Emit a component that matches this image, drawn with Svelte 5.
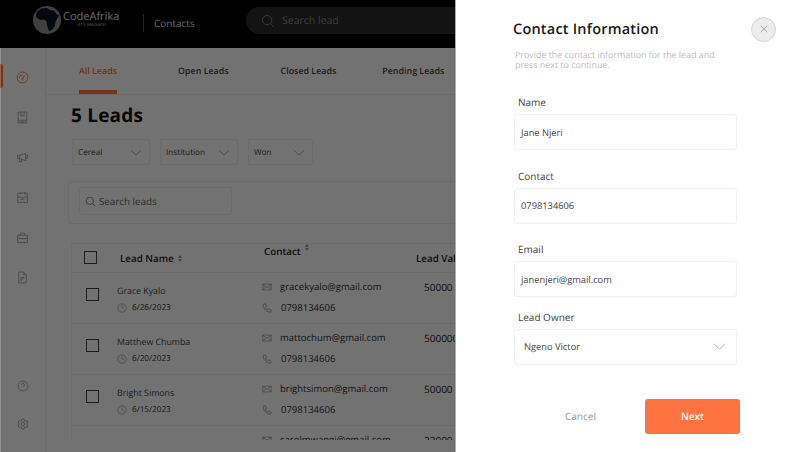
<script>
	const filters = [
		{ label: 'Cereal', cls: 'f1' },
		{ label: 'Institution', cls: 'f2' },
		{ label: 'Won', cls: 'f3' }
	];
	const tabs = ['All Leads', 'Open Leads', 'Closed Leads', 'Pending Leads'];
	const leads = [
		{ name: 'Grace Kyalo', date: '6/26/2023', email: 'gracekyalo@gmail.com', value: '50000' },
		{ name: 'Matthew Chumba', date: '6/20/2023', email: 'mattochum@gmail.com', value: '500000' },
		{ name: 'Bright Simons', date: '6/15/2023', email: 'brightsimon@gmail.com', value: '50000' },
		{ name: 'Carol Mwangi', date: '6/12/2023', email: 'carolmwangi@gmail.com', value: '22000' }
	];
	const fields = [
		{ label: 'Name', value: 'Jane Njeri' },
		{ label: 'Contact', value: '0798134606' },
		{ label: 'Email', value: 'janenjeri@gmail.com' }
	];
	const navTop = [
		'M2 12a10 10 0 1 1 20 0 10 10 0 0 1-20 0z M12 13l4-5 M6 13a6 6 0 0 1 6-6 M18 13v0 M12 13a1.500 1.500 0 1 0 .1 0',
		'M4 2h16v20H4z M4 17h16 M9 2v8l3-2 3 2V2 M8 20h8',
		'M3 8h4l11-4v14L7 14H3z M7 8v6 M18 8h3v5h-3 M6 14v6h4v-5',
		'M3 4h18v17H3z M3 11h6l1 2h4l1-2h6 M8 2v4 M16 2v4 M8 16h8',
		'M3 8h18v13H3z M8 8V4h8v4 M3 14h18 M12 13v2',
		'M5 2h9l5 5v15H5z M14 2v5h5 M9 12h6l-6 6v-6z'
	];
</script>

<div class="app">
	<header class="topbar">
		<div class="logo">
			<svg viewBox="0 0 28 28" width="28" height="28">
				<circle cx="14" cy="14" r="14" fill="#8e8e8e" />
				<path d="M8 2.500 14 2l3 2 4 .5 3 4 2.500.5-3 5-1 2-.5 4-3.500 4.500h-3l-1.500-6-.5-3-2-2-4.500.5-4-3 .5-5z" fill="#0d1622" />
			</svg>
			<div class="brand">
				<span class="brand-name">CodeAfrika</span>
				<span class="brand-sub">LET'S INNOVATE!</span>
			</div>
		</div>
		<div class="page-name">Contacts</div>
		<div class="top-search">
			<svg viewBox="0 0 24 24" width="14" height="14" class="ic"><circle cx="10.500" cy="10.500" r="8" /><path d="m16.500 16.500 6 6" /></svg>
			<span>Search lead</span>
		</div>
	</header>

	<div class="body">
		<nav class="sidebar">
			<div class="nav-top">
				{#each navTop as d, i}
					<span class="nav-item" class:active={i === 0}>
						<svg viewBox="0 0 24 24" width="13" height="13" class="ic"><path d={d} /></svg>
					</span>
				{/each}
			</div>
			<div class="nav-bottom">
				<svg viewBox="0 0 24 24" width="12" height="12" class="ic"><circle cx="12" cy="12" r="10" /><path d="M9 9.500a3 3 0 1 1 4.500 2.500c-1 .6-1.500 1.200-1.500 2.500 M12 17v1" /></svg>
				<svg viewBox="0 0 24 24" width="12" height="12" class="ic"><circle cx="12" cy="12" r="3.500" /><path d="M10 2h4l.6 3 2.600 1.500 2.900-1 2 3.500-2.300 2v2l2.300 2-2 3.500-2.900-1-2.600 1.500-.6 3h-4l-.6-3-2.600-1.500-2.900 1-2-3.500 2.300-2v-2L1.900 9l2-3.500 2.900 1L9.400 5z" /></svg>
			</div>
		</nav>

		<main class="main">
			<div class="tabs">
				{#each tabs as t, i}
					<span class="tab" class:current={i === 0}>{t}</span>
				{/each}
			</div>
			<h1>5 Leads</h1>
			<div class="filters">
				{#each filters as f}
					<div class="filter {f.cls}">
						<span>{f.label}</span>
						<svg viewBox="0 0 16 9" width="12" height="7" class="chev"><path d="m1 1 7 7 7-7" /></svg>
					</div>
				{/each}
			</div>
			<div class="search-card">
				<div class="search-leads">
					<svg viewBox="0 0 24 24" width="11" height="11" class="ic"><circle cx="10.500" cy="10.500" r="8" /><path d="m16.500 16.500 6 6" /></svg>
					<span>Search leads</span>
				</div>
			</div>
			<div class="table">
				<div class="thead">
					<span class="box head-box"></span>
					<span class="th th-name">Lead Name
						<svg viewBox="0 0 6 10" width="4" height="7" class="sort"><path d="M3 0l3 4H0zM3 10 0 6h6z" /></svg>
					</span>
					<span class="th th-contact">Contact
						<svg viewBox="0 0 6 10" width="4" height="7" class="sort up"><path d="M3 0l3 4H0zM3 10 0 6h6z" /></svg>
					</span>
					<span class="th th-value">Lead Value</span>
				</div>
				{#each leads as lead}
					<div class="row">
						<span class="box"></span>
						<div class="who">
							<span class="lead-name">{lead.name}</span>
							<span class="lead-date">
								<svg viewBox="0 0 24 24" width="10" height="10" class="ic"><circle cx="12" cy="12" r="10" /><path d="M12 6v6l4 2" /></svg>
								{lead.date}
							</span>
						</div>
						<div class="contact">
							<span class="line">
								<svg viewBox="0 0 24 24" width="10" height="10" class="ic"><path d="M2 5h20v14H2z M2 5l10 8 10-8 M2 19l7-8 M22 19l-7-8" /></svg>
								{lead.email}
							</span>
							<span class="line phone">
								<svg viewBox="0 0 24 24" width="10" height="10" class="ic"><path d="M3 3l5-1 3 6-3 2c1 3 3 6 6 7l2-3 6 3-1 5C10 22 2 13 3 3z" /></svg>
								0798134606
							</span>
						</div>
						<span class="value">{lead.value}</span>
					</div>
				{/each}
			</div>
		</main>
	</div>

	<div class="overlay"></div>

	<aside class="drawer">
		<div class="drawer-head">
			<h2>Contact Information</h2>
			<button class="close" aria-label="Close">
				<svg viewBox="0 0 10 10" width="8" height="8"><path d="m1 1 8 8M9 1 1 9" /></svg>
			</button>
		</div>
		<p class="lede">Provide the contact information for the lead and press next to continue.</p>
		<form class="form">
			{#each fields as f}
				<div class="field">
					<span class="label">{f.label}</span>
					<div class="input">{f.value}</div>
				</div>
			{/each}
			<div class="field owner">
				<span class="label">Lead Owner</span>
				<div class="input select">
					<span>Ngeno Victor</span>
					<svg viewBox="0 0 16 9" width="13" height="7" class="chev"><path d="m1 1 7 7 7-7" /></svg>
				</div>
			</div>
		</form>
		<div class="actions">
			<span class="cancel">Cancel</span>
			<span class="next">Next</span>
		</div>
	</aside>
</div>

<style>
	:global(body) { margin: 0; }
	.app {
		position: relative; width: 806px; height: 452px; overflow: hidden;
		background: #fdfdfd; font-family: "Open Sans", sans-serif; color: #333;
		text-rendering: geometricPrecision;
	}
	.ic { fill: none; stroke: currentColor; stroke-width: 1.500; flex-shrink: 0; }

	/* top bar */
	.topbar { height: 48px; background: #000; display: flex; align-items: flex-start; color: #fff; box-sizing: border-box; }
	.logo { display: flex; align-items: center; gap: 2px; margin: 6px 0 0 33px; width: 110px; }
	.brand { display: flex; flex-direction: column; align-items: center; margin-top: -3px; }
	.brand-name { font-size: 11px; line-height: 13px; color: #e2e2e2; }
	.brand-sub { font-size: 3.800px; line-height: 5px; color: #ddd; }
	.page-name {
		margin-top: 14px; height: 18px; border-left: 1px solid #555; padding-left: 10px; width: 92px;
		font-size: 10px; line-height: 18px; color: #ddd;
	}
	.top-search {
		flex: 1; height: 27px; margin-top: 7px; background: #2c2c2c; border-radius: 14px 0 0 14px;
		display: flex; align-items: center; gap: 7px; padding-left: 15px; color: #888; font-size: 10.500px;
	}

	/* sidebar */
	.body { display: flex; height: 404px; }
	.sidebar {
		width: 45px; border-right: 1px solid #eee; flex-shrink: 0; box-sizing: content-box;
		display: flex; flex-direction: column; justify-content: space-between; color: #999;
	}
	.nav-top { display: flex; flex-direction: column; gap: 27px; padding-top: 23px; }
	.nav-item { height: 13px; display: flex; justify-content: center; position: relative; }
	.nav-item.active { color: #ff7340; }
	.nav-item.active::before {
		content: ''; position: absolute; left: 0; top: -7px; width: 3px; height: 24px;
		background: #ff7340; border-radius: 0 2px 2px 0;
	}
	.nav-bottom { display: flex; flex-direction: column; align-items: center; gap: 26px; padding-bottom: 22px; }

	/* main */
	.main { flex: 1; min-width: 0; display: flex; flex-direction: column; }
	.tabs { height: 46px; display: flex; border-bottom: 1px solid #eee; padding-left: 33px; flex-shrink: 0; }
	.tab { font-size: 8.900px; font-weight: 600; color: #444; line-height: 46px; height: 46px; white-space: nowrap; box-sizing: border-box; }
	.tab:nth-child(2) { margin-left: 61px; margin-right: 52px; }
	.tab:nth-child(3) { margin-right: 46px; }
	.tab.current { color: #ff7340; border-bottom: 4px solid #ff7340; border-radius: 4px 4px 0 0; }
	h1 { margin: 7px 0 0 25px; font-size: 19px; line-height: 26px; font-weight: 700; color: #111; letter-spacing: .2px; }
	.filters { display: flex; gap: 10px; margin: 11px 0 0 26px; }
	.filter {
		height: 26px; box-sizing: border-box; border: 1px solid #eee; border-radius: 3px;
		display: flex; align-items: center; justify-content: space-between; padding: 0 7px 0 5px;
		font-size: 8.200px; color: #444; width: 78px;
	}
	.f3 { width: 65px; }
	.chev { fill: none; stroke: #aaa; stroke-width: 1.200; }
	.search-card { margin: 16px 0 0 22px; height: 43px; border: 1px solid #eee; border-right: 0; border-radius: 3px 0 0 3px; padding: 5px 0 0 10px; box-sizing: border-box; }
	.search-leads {
		width: 153px; height: 28px; box-sizing: border-box; border: 1px solid #eee; border-radius: 3px;
		display: flex; align-items: center; gap: 3px; padding-left: 5px; font-size: 9.800px; color: #666;
	}
	.table { margin: 19px 0 0 25px; height: 197px; overflow: hidden; border-left: 1px solid #f2f2f2; }
	.thead { height: 30px; display: flex; border: 1px solid #eee; border-width: 1px 0; box-sizing: border-box; }
	.box { width: 13px; height: 13px; border: 1px solid #444; box-sizing: border-box; flex-shrink: 0; background: transparent; }
	.head-box { margin: 7px 0 0 12px; }
	.th { font-size: 9.800px; font-weight: 600; color: #222; white-space: nowrap; }
	.th-name { margin: 8px 0 0 23px; width: 144px; }
	.th-contact { margin: 0; width: 152px; }
	.th-value { margin-top: 8px; }
	.sort { fill: #888; margin-left: 2px; }
	.sort.up { vertical-align: 4px; }
	.row { height: 51px; display: flex; border-bottom: 1px solid #eee; box-sizing: border-box; }
	.row .box { margin: 15px 0 0 14px; }
	.who { width: 145px; margin-left: 18px; padding-top: 12px; display: flex; flex-direction: column; gap: 3px; }
	.lead-name { font-size: 8.800px; line-height: 13px; color: #444; }
	.lead-date { font-size: 8.200px; line-height: 13px; color: #333; display: flex; align-items: center; gap: 5px; }
	.lead-date .ic { color: #888; }
	.contact { width: 162px; padding-top: 7px; display: flex; flex-direction: column; gap: 7px; }
	.line { font-size: 9.500px; line-height: 14px; color: #333; display: flex; align-items: center; gap: 8px; white-space: nowrap; }
	.line .ic { color: #888; }
	.phone { gap: 9px; }
	.value { font-size: 10px; line-height: 14px; margin-top: 7px; color: #222; }

	.overlay { position: absolute; inset: 0; background: rgba(0, 0, 0, 0.55); }
	.overlay::before {
		content: ''; position: absolute; left: 0; top: 48px; bottom: 0; width: 1px;
		background: rgba(255, 255, 255, 0.25);
	}

	/* drawer */
	.drawer {
		position: absolute; top: 0; right: 0; bottom: 0; width: 351px; background: #fff;
		border-left: 1px solid #aaa; padding: 17px 0 0 57px; box-sizing: border-box;
	}
	.drawer-head { display: flex; align-items: center; justify-content: space-between; width: 263px; height: 24px; }
	h2 { margin: 0; font-size: 14.500px; font-weight: 600; color: #1a1a1a; letter-spacing: .2px; }
	.close {
		width: 25px; height: 25px; border-radius: 50%; background: #ececec; border: 1px solid #d5d5d5;
		display: flex; align-items: center; justify-content: center; padding: 0;
	}
	.close path { stroke: #999; stroke-width: 1; fill: none; }
	.lede { margin: 9px 0 0 2px; width: 215px; font-size: 8.900px; line-height: 10px; color: #bdbdbd; }
	.form { margin: 26px 0 0 1px; display: flex; flex-direction: column; gap: 19.500px; width: 223px; }
	.field { display: flex; flex-direction: column; gap: 5px; }
	.owner { margin-top: -6px; }
	.label { font-size: 10px; line-height: 13px; color: #444; padding-left: 4px; }
	.input {
		height: 36px; box-sizing: border-box; border: 1px solid #f1f1f1; border-radius: 3px;
		display: flex; align-items: center; padding-left: 6px; font-size: 9.300px; color: #444;
	}
	.select { justify-content: space-between; padding: 0 10px 0 9px; }
	.actions { display: flex; align-items: center; margin-top: 34px; padding-left: 52px; }
	.cancel { font-size: 10px; color: #999; width: 80px; }
	.next {
		width: 95px; height: 35px; background: #ff7340; border-radius: 3px; color: #fff;
		font-size: 10px; font-weight: 600; display: flex; align-items: center; justify-content: center;
	}
</style>
